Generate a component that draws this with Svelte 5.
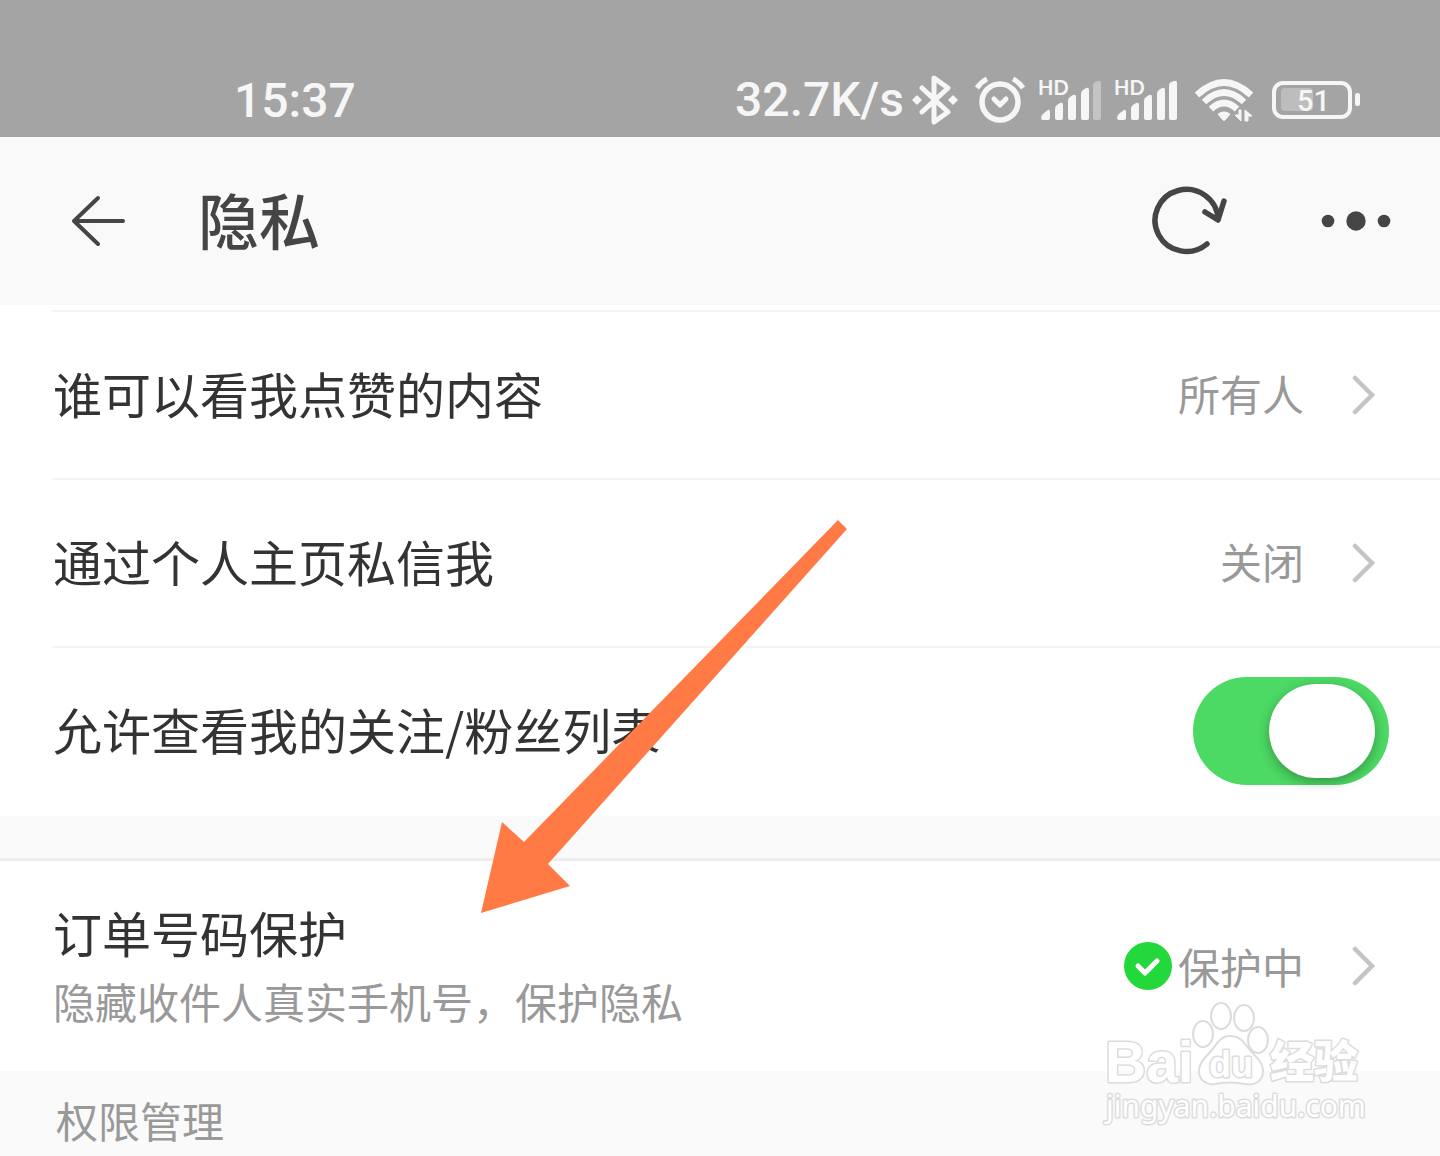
<script>
  let allowFollowList = true;

  const visibilityRows = [
    { label: '谁可以看我点赞的内容', value: '所有人' },
    { label: '通过个人主页私信我', value: '关闭' }
  ];

  // Signal strength of each SIM, out of five bars
  const signals = [4, 5];
  const bars = [
    'M2 31Q2 27 5 25L9 22Q11 21 11 24V30Q11 32 9 32H4Q2 32 2 30Z',
    'M16 21Q16 18 18 17L21 15Q24 14 24 17V30Q24 32 22 32H18Q16 32 16 30Z',
    'M29 13Q29 10 31 9L34 7Q37 6 37 9V30Q37 32 35 32H31Q29 32 29 30Z',
    'M42 6Q42 3 44 2L47 0Q50 -1 50 2V30Q50 32 48 32H44Q42 32 42 30Z',
    'M54 -2Q54 -5 56 -6L59 -7Q62 -8 62 -5V30Q62 32 60 32H56Q54 32 54 30Z'
  ];
</script>

{#snippet chevron()}
  <svg class="chevron" viewBox="0 0 24 40" aria-hidden="true">
    <path d="M3 3L20 20L3 37" fill="none" stroke="#c4c4c4" stroke-width="4.5" stroke-linecap="round" />
  </svg>
{/snippet}

<div class="page">
  <div class="status-bar">
    <span class="status-text">15:37</span>
    <div class="status-icons">
      <span class="status-text">32.7K/s</span>
      <svg class="bluetooth" viewBox="0 0 46 50" aria-hidden="true">
        <path d="M10 13L36 37L22 47V3L36 13L10 37" fill="none" stroke="#f6f6f6" stroke-width="5" stroke-linejoin="round" stroke-linecap="round" />
        <path d="M5 21L9 25L5 29L1 25ZM41 21L45 25L41 29L37 25Z" fill="#f6f6f6" stroke="#f6f6f6" stroke-width="1.5" stroke-linejoin="round" />
      </svg>
      <svg class="alarm" viewBox="0 0 52 50" aria-hidden="true">
        <g fill="none" stroke="#f6f6f6" stroke-linecap="round" stroke-linejoin="round">
          <circle cx="26" cy="27" r="18" stroke-width="5.5" />
          <path d="M20 24L26 30L32 24" stroke-width="5" />
          <path d="M3 13Q7 7 13 4M39 4Q45 7 49 13" stroke-width="5" stroke-linecap="butt" />
        </g>
      </svg>
      {#each signals as level}
        <svg class="signal" viewBox="0 -5 64 54" role="img" aria-label="信号">
          <text x="0" y="17" class="hd">HD</text>
          <g transform="translate(1 10)">
            {#each bars as d, i}
              <path {d} fill="#f6f6f6" opacity={i < level ? 1 : 0.4} />
            {/each}
          </g>
        </svg>
      {/each}
      <svg class="wifi" viewBox="0 0 60 48" aria-hidden="true">
        <g fill="none" stroke="#f6f6f6" stroke-width="6.5">
          <path d="M3 19Q30 -6 57 19" />
          <path d="M10 26Q30 7 50 26" />
          <path d="M17 33Q30 21 43 33" />
        </g>
        <path d="M24 38Q30 34 36 38L31 44Q30 45 29 44Z" fill="#f6f6f6" stroke="#f6f6f6" stroke-width="1" />
        <path d="M47 34V45L41 39H45V34ZM51 45V34L58 40H54V45Z" fill="#f6f6f6" stroke="#f6f6f6" stroke-width="1" stroke-linejoin="round" />
      </svg>
      <svg class="battery" viewBox="0 0 88 40" role="img" aria-label="电量">
        <rect x="2" y="3" width="76" height="34" rx="9" fill="none" stroke="#f6f6f6" stroke-width="4" />
        <rect x="9" y="8" width="32" height="23" rx="4" fill="#bdbdbd" />
        <rect x="83" y="13" width="5" height="13" rx="2" fill="#f6f6f6" />
        <text x="25" y="31" class="charge">51</text>
      </svg>
    </div>
  </div>

  <header>
    <button class="icon-button" aria-label="返回">
      <svg class="back" viewBox="0 0 56 52" aria-hidden="true">
        <path d="M52 26H3M27 3L3 26L27 49" fill="none" stroke="#454545" stroke-width="4" stroke-linecap="round" stroke-linejoin="round" />
      </svg>
    </button>
    <h1>隐私</h1>
    <button class="icon-button" aria-label="刷新">
      <svg class="refresh" viewBox="0 0 76 70" aria-hidden="true">
        <g fill="none" stroke="#454545" stroke-width="5.5" stroke-linecap="round" stroke-linejoin="round">
          <path d="M56 58A31.500 31 0 1 1 67 33" />
          <path d="M54 26L67 34L73 15" />
        </g>
      </svg>
    </button>
    <button class="icon-button" aria-label="更多">
      <svg class="more" viewBox="0 0 70 20" aria-hidden="true">
        <g fill="#454545">
          <circle cx="7" cy="10" r="6.300" />
          <circle cx="35" cy="10" r="9.700" />
          <circle cx="63" cy="10" r="6.300" />
        </g>
      </svg>
    </button>
  </header>

  <main>
    <ul class="settings">
      {#each visibilityRows as row}
        <li>
          <button class="row">
            <span class="label">{row.label}</span>
            <span class="value">{row.value}</span>
            {@render chevron()}
          </button>
        </li>
      {/each}
      <li>
        <div class="row toggle-row">
          <label class="label" for="follow-list">允许查看我的关注/粉丝列表</label>
          <input id="follow-list" class="toggle" type="checkbox" bind:checked={allowFollowList} />
        </div>
      </li>
    </ul>

    <section class="protection">
      <button class="row">
        <span class="label">
          订单号码保护
          <small>隐藏收件人真实手机号，保护隐私</small>
        </span>
        <span class="value">
          <svg class="check" viewBox="0 0 48 48" aria-hidden="true">
            <circle cx="24" cy="24" r="24" fill="#22d83a" />
            <path d="M14 24L21 31L33 19" fill="none" stroke="#fff" stroke-width="5" stroke-linecap="round" stroke-linejoin="round" />
          </svg>
          保护中
        </span>
        {@render chevron()}
      </button>
    </section>

    <h2>权限管理</h2>
  </main>

  <svg class="pointer" viewBox="0 0 368 396" aria-hidden="true">
    <path d="M358 0L367 9L68 344L90 366L1 393L22 302L44 322Z" fill="#ff7a45" />
  </svg>

  <svg class="watermark" viewBox="0 0 264 126" role="img" aria-label="Baidu 经验">
    <g fill="#fff" stroke="#dcdcdc" stroke-width="2" stroke-linejoin="round">
      <text x="3" y="82" class="brand">Bai</text>
      <ellipse cx="101" cy="34" rx="10" ry="13" />
      <ellipse cx="119" cy="16" rx="10" ry="13" />
      <ellipse cx="142" cy="18" rx="10" ry="13" />
      <ellipse cx="156" cy="40" rx="10" ry="13" />
      <path d="M128 36C119 36 115 43 110 50C104 57 97 62 97 71C97 80 104 85 113 84C123 82 133 82 143 84C153 86 161 81 161 71C161 61 153 57 147 49C142 42 138 36 128 36Z" />
      <text x="107" y="77" class="du">du</text>
      <text x="168" y="78" class="brand-cn">经验</text>
      <text x="4" y="117" class="url">jingyan.baidu.com</text>
    </g>
  </svg>
</div>

<style>
  :global(body) {
    margin: 0;
    background: #fafafa;
  }

  .page {
    position: relative;
    overflow: hidden;
    font-family: 'Noto Sans CJK SC', sans-serif;
    color: #333;
  }

  .status-bar {
    display: flex;
    justify-content: space-between;
    align-items: center;
    padding: 65px 80px 0 234px;
    background: #a4a4a4;
    color: #f6f6f6;
  }

  .status-text {
    font-family: Roboto, sans-serif;
    font-size: 48px;
    font-weight: 500;
    line-height: 72px;
  }

  .status-icons {
    display: flex;
    align-items: center;
    margin-top: -2px;
  }

  .bluetooth {
    width: 46px;
    height: 50px;
    margin-left: 8px;
  }

  .alarm {
    width: 52px;
    height: 50px;
    margin-left: 16px;
  }

  .signal {
    width: 64px;
    height: 54px;
    margin-left: 12px;
  }

  .wifi {
    width: 60px;
    height: 48px;
    margin-left: 16px;
  }

  .battery {
    width: 88px;
    height: 40px;
    margin-left: 18px;
  }

  .hd {
    font: 700 20px Lato, sans-serif;
    fill: #f6f6f6;
  }

  .charge {
    font: 500 29px Roboto, sans-serif;
    fill: #f6f6f6;
  }

  header {
    display: flex;
    align-items: center;
    padding: 34px 49px 34px 71px;
    background: #f9f9f9;
  }

  h1 {
    flex: 1;
    margin: 0 0 0 71px;
    padding-bottom: 4px;
    font-size: 61px;
    font-weight: 500;
    line-height: 96px;
    color: #454545;
  }

  button {
    padding: 0;
    border: 0;
    background: none;
    font: inherit;
    color: inherit;
    cursor: pointer;
  }

  .icon-button {
    display: flex;
  }

  .back {
    width: 56px;
    height: 52px;
  }

  .refresh {
    width: 76px;
    height: 70px;
  }

  .more {
    width: 70px;
    height: 20px;
    margin-left: 94px;
  }

  .settings {
    margin: 0;
    padding: 5px 0 2px 52px;
    list-style: none;
    background: #fff;
  }

  .settings li {
    border-top: 2px solid #f4f4f4;
  }

  .row {
    display: flex;
    align-items: center;
    box-sizing: border-box;
    width: 100%;
    min-height: 166px;
    padding-right: 64px;
    text-align: left;
  }

  .toggle-row {
    padding-right: 51px;
  }

  .label {
    flex: 1;
    padding-left: 1px;
    font-size: 49px;
    line-height: 70px;
  }

  .label small {
    display: block;
    font-size: 42px;
    line-height: 68px;
    color: #999;
  }

  .value {
    display: flex;
    align-items: center;
    gap: 6px;
    font-size: 42px;
    line-height: 68px;
    color: #999;
  }

  .settings .label,
  .settings .value {
    padding-bottom: 4px;
  }

  .check {
    width: 48px;
    height: 48px;
  }

  .chevron {
    width: 24px;
    height: 40px;
    margin-left: 48px;
  }

  .toggle {
    appearance: none;
    display: flex;
    align-items: center;
    box-sizing: border-box;
    width: 196px;
    height: 108px;
    margin: 0;
    padding: 0 14px;
    border-radius: 54px;
    background: #ddd;
    cursor: pointer;
  }

  .toggle::before {
    content: '';
    width: 106px;
    height: 94px;
    border-radius: 47px;
    background: #fff;
    box-shadow: 0 4px 12px rgba(0, 0, 0, 0.3);
  }

  .toggle:checked {
    justify-content: flex-end;
    background: #4cd964;
  }

  .protection {
    margin-top: 42px;
    padding: 36px 0 36px 52px;
    border-top: 3px solid #eee;
    background: #fff;
  }

  .protection .row {
    min-height: 138px;
  }

  h2 {
    margin: 0;
    padding: 15px 56px 2px;
    font-size: 42px;
    font-weight: 400;
    line-height: 68px;
    color: #999;
  }

  .pointer {
    position: absolute;
    top: 520px;
    left: 480px;
    width: 368px;
    height: 396px;
    pointer-events: none;
  }

  .watermark {
    position: absolute;
    top: 1000px;
    right: 74px;
    width: 264px;
    height: 126px;
    pointer-events: none;
  }

  .watermark text {
    paint-order: stroke;
    stroke-width: 3px;
  }

  .brand {
    font: 700 57px 'Liberation Sans', sans-serif;
  }

  .du {
    font: 700 36px 'Liberation Sans', sans-serif;
  }

  .brand-cn {
    font: 900 44px 'Noto Sans CJK SC', sans-serif;
  }

  .url {
    font: 400 30px 'Noto Sans', sans-serif;
  }
</style>
